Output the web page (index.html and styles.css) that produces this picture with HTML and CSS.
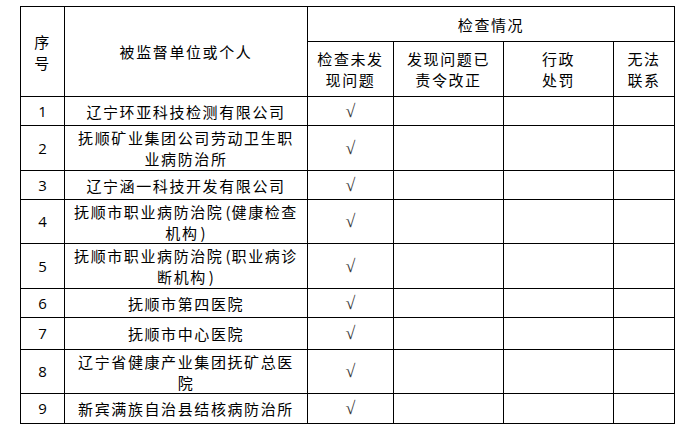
FILE: index.html
```html
<!DOCTYPE html>
<html lang="zh-CN">
<head>
<meta charset="utf-8">
<title>检查情况</title>
<link rel="stylesheet" href="styles.css">
</head>
<body>
<table class="grid">
  <colgroup>
    <col class="c-no">
    <col class="c-name">
    <col class="c-a">
    <col class="c-b">
    <col class="c-c">
    <col class="c-d">
  </colgroup>
  <thead>
    <tr class="h1">
      <th rowspan="2">序<br>号</th>
      <th rowspan="2">被监督单位或个人</th>
      <th colspan="4">检查情况</th>
    </tr>
    <tr class="h2">
      <th>检查未发<br>现问题</th>
      <th>发现问题已<br>责令改正</th>
      <th>行政<br>处罚</th>
      <th>无法<br>联系</th>
    </tr>
  </thead>
  <tbody>
    <tr class="r29"><td class="no">1</td><td class="name">辽宁环亚科技检测有限公司</td><td class="ck">√</td><td></td><td></td><td></td></tr>
    <tr class="r45"><td class="no">2</td><td class="name">抚顺矿业集团公司劳动卫生职<br>业病防治所</td><td class="ck">√</td><td></td><td></td><td></td></tr>
    <tr class="r29"><td class="no">3</td><td class="name">辽宁涵一科技开发有限公司</td><td class="ck">√</td><td></td><td></td><td></td></tr>
    <tr class="r44"><td class="no">4</td><td class="name">抚顺市职业病防治院<span class="paren">(</span>健康检查<br>机构<span class="paren">)</span></td><td class="ck">√</td><td></td><td></td><td></td></tr>
    <tr class="r45"><td class="no">5</td><td class="name">抚顺市职业病防治院<span class="paren">(</span>职业病诊<br>断机构<span class="paren">)</span></td><td class="ck">√</td><td></td><td></td><td></td></tr>
    <tr class="r29"><td class="no">6</td><td class="name">抚顺市第四医院</td><td class="ck">√</td><td></td><td></td><td></td></tr>
    <tr class="r32"><td class="no">7</td><td class="name">抚顺市中心医院</td><td class="ck">√</td><td></td><td></td><td></td></tr>
    <tr class="r44"><td class="no">8</td><td class="name">辽宁省健康产业集团抚矿总医<br>院</td><td class="ck">√</td><td></td><td></td><td></td></tr>
    <tr class="r30"><td class="no">9</td><td class="name">新宾满族自治县结核病防治所</td><td class="ck">√</td><td></td><td></td><td></td></tr>
  </tbody>
</table>
</body>
</html>
```
FILE: styles.css
```css
html, body {
  margin: 0;
  padding: 0;
  background: #ffffff;
}

body {
  padding: 6px 0 0 20px;
  font-family: "Noto Sans CJK SC", "Noto Sans", sans-serif;
  color: #000;
}

.grid {
  border-collapse: collapse;
  table-layout: fixed;
  width: 654px;
}

.c-no { width: 44px; }
.c-name { width: 243px; }
.c-a { width: 86px; }
.c-b { width: 110px; }
.c-c { width: 110px; }
.c-d { width: 61px; }

.grid th,
.grid td {
  border: 1px solid #000;
  padding: 0;
  text-align: center;
  vertical-align: middle;
  font-weight: normal;
  font-size: 15px;
  line-height: 21px;
  letter-spacing: 1.6px;
  white-space: nowrap;
}

.h1 { height: 35px; }
.h2 { height: 55px; }
.r29 { height: 29px; }
.r30 { height: 30px; }
.r32 { height: 32px; }
.r44 { height: 44px; }
.r45 { height: 45px; }

.paren {
  letter-spacing: 0;
  margin: 0 1px 0 2px;
}

.grid td.no {
  font-family: "Open Sans", "Liberation Sans", sans-serif;
  font-size: 15px;
  letter-spacing: 0;
}

.grid td.ck {
  font-family: "Liberation Serif", serif;
  font-size: 18px;
  letter-spacing: 0;
  color: #3a3a3a;
}
```
